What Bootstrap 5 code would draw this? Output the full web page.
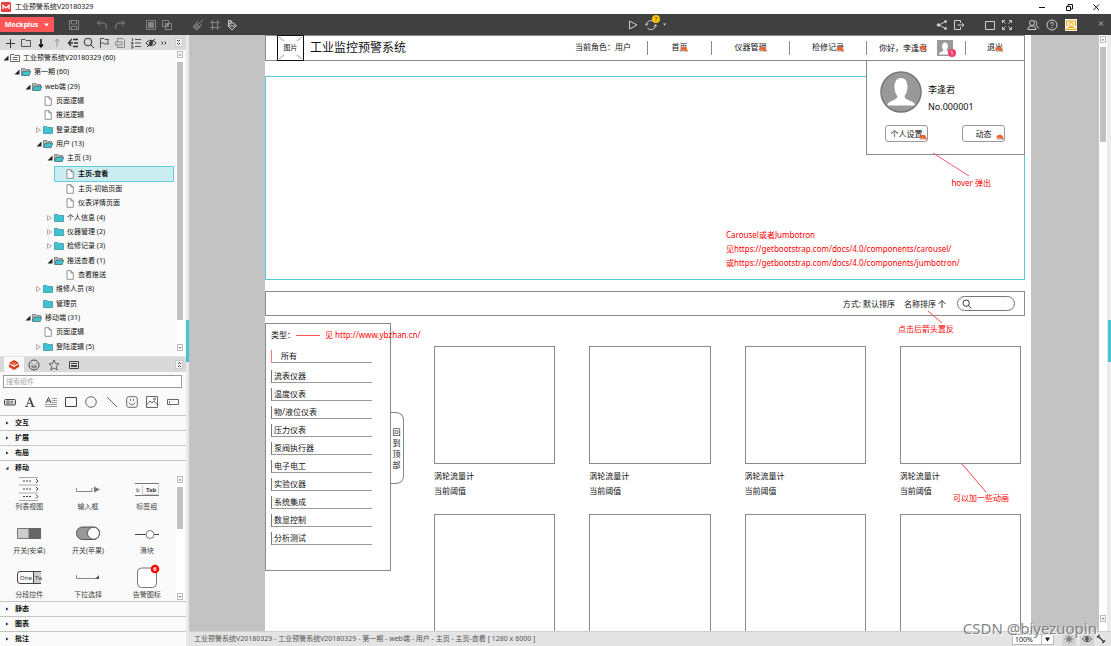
<!DOCTYPE html>
<html lang="zh-CN">
<head>
<meta charset="utf-8">
<meta name="viewport" content="width=device-width, initial-scale=1">
<title>工业预警系统V20180329</title>
<link href="https://cdn.jsdelivr.net/npm/bootstrap@5.3.0/dist/css/bootstrap.min.css" rel="stylesheet">
<style>
:root{--teal:#43c5d3;--bar:#404040;--line:#8a8a8a}
body{font-family:"Noto Sans","Noto Sans CJK SC",sans-serif;font-size:7px;line-height:10px;color:#111;background:#fff}
a{color:inherit;text-decoration:none}
svg{display:block;flex:none;fill:none;stroke:currentColor;stroke-width:1}
button,select{font:inherit;color:inherit;background:none;border:0;padding:0}
button{display:flex;align-items:center;justify-content:center}
.i12{width:12px;height:12px}
.i10{width:10px;height:10px}
.titlebar{height:14px;padding:0 10px 0 1px}
.wctl{gap:17px}
.toolbar{height:21px;background:var(--bar);color:#858585;padding-right:5px}
.toolbar .lit{color:#cfcfcf}
.mock-btn{width:54px;height:15px;background:#ff5757;color:#fff;font-size:7px;font-weight:700;gap:6px}
.left-pane{width:186px;background:#fafafa}
.tree-tools{height:15px;background:#dadada;color:#333;padding:0 3px 0 4px}
.fold-box{width:8px;height:9px;background:#f4f4f4;border:1px solid #ccc}
.tree-list{padding:1px 2px 2px 0}
.tree-list a{padding-left:calc(2px + 11px * var(--lv));white-space:nowrap}
.lv0{--lv:0}.lv1{--lv:1}.lv2{--lv:2}.lv3{--lv:3}.lv4{--lv:4}.lv5{--lv:5}
.tree-list a.chosen{margin-left:54px;padding-left:2px;background:#cbecf1;border:1px solid #5fcfdb;font-weight:700}
.tw{width:8px;height:8px}
.ti{width:10px;height:10px;margin-right:3px}
.vscroll{width:8px;background:#fff;padding:1px 1px}
.vscroll .thumb{background:#c1c1c1}
.left-pane .vscroll{margin-right:2px}
.splitter{width:3px;background:#e9e9e9}
.grip{height:42px;background:var(--teal)}
.pal-tabs{height:15px;background:#d9d9d9;padding:0 3px 0 4px;color:#444}
.pal-tabs .tab-btn{width:20px;height:15px}
.pal-tabs .on{background:#fafafa}
.find-box{height:13px;min-height:13px;margin:3px 4px 0 3px;width:auto;padding:0 2px;border:1px solid #999;border-radius:0;font-size:7px;line-height:11px}
.find-box::placeholder{color:#aaa}
.shape-row{height:27px;padding-right:3px;color:#444}
.acc-head{height:15px;border-top:1px solid #c4c4c4;padding-left:4px;gap:5px;font-weight:700;width:100%;justify-content:flex-start}
.comp-area{height:126px}
.comp-grid{display:grid;grid-template-columns:repeat(3,1fr);grid-auto-rows:44px;padding-top:1px}
.comp-grid button{flex-direction:column;justify-content:flex-start;color:#444}
.comp-grid svg{width:26px;height:26px}
.canvas{background:#c3c3c3;padding:0 68px 0 76px}
.sheet{background:#fff;padding-right:6px;height:100%}
.t8{font-size:8px;line-height:12px}
.t9{font-size:9px;line-height:12px}
.wire{border:1px solid var(--line)}
.site-head{height:26px}
.logo-box{width:27px;height:26px;margin:-1px 6px 0 11px;border:1px solid #111}
.site-title{font-size:12px;line-height:16px}
.site-nav>*{height:14px;border-left:1px solid #888;white-space:nowrap}
.site-nav>.role{border:0;padding-right:16px}
.w-a{width:64px}.w-b{width:78px}.w-c{width:77px}.w-d{width:99px}.w-e{width:59px}
.hot{color:#f2622b;width:8px;height:6px;position:absolute;right:0;bottom:3px}
.ubtn .hot{bottom:1px}
.ava{width:16px;height:16px;background:#999;margin-left:10px}
.pip{left:11px;top:9px;width:8px;height:8px;background:#f23d6c;color:#fff;font-size:6px;line-height:8px;text-align:center}
.user-card{top:24px;right:-1px;width:159px;height:95px;background:#fff;padding:9px 13px;z-index:3}
.user-name{padding:14px 0 0 6px}
.user-name :first-child{margin-bottom:5px}
.user-acts{padding:12px 6px 0 5px}
.ubtn{width:43px;height:17px;border:1px solid #999;border-radius:3px}
.hero{height:204px;margin-top:15px;border:1px solid #59cad7}
.hero-note{width:298px;padding-bottom:9px;color:red;font-size:8px;line-height:14px}
.sortbar{height:25px;margin-top:11px;padding-right:9px;gap:9px}
.pill{width:58px;height:15px;border:1px solid #777;border-radius:8px;padding-left:4px}
.pill input{width:38px;border:0;outline:0;background:none;padding:0;font-size:8px}
.cats{width:126px;height:248px;padding:5px 0 0 5px}
.cats li{width:101px;height:13px;margin-bottom:5px;padding-left:2px;border-left:1px solid #777;border-bottom:1px solid #999}
.cats li:first-child{margin:1px 0 7px;padding-left:9px;border-left-color:#f77}
.dash{width:24px;height:1px;background:#f55;margin:0 5px 0 1px}
.see{color:red}
.totop{width:14px;height:72px;margin:89px 0 0 -1px;border:1px solid #888;border-left:0;border-radius:0 8px 8px 0;font-size:8px;line-height:11px}
.goods{display:grid;grid-template-columns:repeat(4,1fr);column-gap:34px;margin:23px 4px 0 30px;flex:1}
.shot{height:118px;margin-bottom:4px}
.goods .t8{line-height:15px}
.goods>div{height:168px}
.note{position:absolute;color:red;white-space:nowrap;z-index:4}
.n1{right:40px;top:118px}.n2{right:74px;top:276px}.n3{right:20px;top:429px}
.edge{width:4px;background:#ebebeb}
.statusbar{height:15px;background:#e4e4e4;border-top:1px solid #cfcfcf;color:#555;padding:0 3px 0 5px}
.zoom-sel{width:42px;height:11px;background:#fff;border:1px solid #bbb;color:#222}
.zoom-sel select{appearance:none;width:29px;padding-left:2px;border-right:1px solid #bbb;height:9px;line-height:9px}
.sbtn{width:14px;height:13px}
.sbtn.on{background:#d4d4d4}
.wm{right:14px;bottom:8px;font-size:15px;line-height:20px;color:#777;opacity:.9;text-shadow:1px 1px 0 #fff;z-index:9}
</style>
</head>
<body>
<svg width="0" height="0" class="position-absolute" aria-hidden="true">
<symbol id="open" viewBox="0 0 8 8"><path d="M6.500 1.500V6.500H1.500z" fill="#222" stroke="none"/></symbol>
<symbol id="shut" viewBox="0 0 8 8"><path d="M1.500 1.500L5.500 4L1.500 6.500z" stroke="#999" stroke-width=".8"/></symbol>
<symbol id="fold" viewBox="0 0 10 10"><path d="M.5 1.500H4L5 2.500H9.500V8.500H.5z" fill="#3fc3d3" stroke="#2b8f9b" stroke-width=".7"/></symbol>
<symbol id="foldo" viewBox="0 0 10 10"><path d="M.5 8V1.500H4L5 2.500H8.500V4" fill="#bbb" stroke="#666" stroke-width=".7"/><path d="M.6 8.500L2.200 4.200H9.700L8.200 8.500z" fill="#3fc3d3" stroke="#375d62" stroke-width=".7"/></symbol>
<symbol id="doc" viewBox="0 0 10 10"><path d="M2 .7H6L8.300 3V9.300H2z M6 .7V3H8.300" fill="#fff" stroke="#666" stroke-width=".7"/></symbol>
<symbol id="proj" viewBox="0 0 10 10"><path d="M.5 8.500V1.500H4L5 2.500H9.500V8.500z M2.500 4.500H7.500M2.500 6.500H7.500" stroke="#444" stroke-width=".8"/></symbol>
<symbol id="up" viewBox="0 0 6 7"><rect x=".5" y=".5" width="5" height="6" stroke="#bbb"/><path d="M1.500 4.500L3 2.500L4.500 4.500z" fill="#888" stroke="none"/></symbol>
<symbol id="down" viewBox="0 0 6 7"><rect x=".5" y=".5" width="5" height="6" stroke="#bbb"/><path d="M1.500 3L3 5L4.500 3z" fill="#888" stroke="none"/></symbol>
<symbol id="man" viewBox="0 0 16 16"><path d="M2 14.500C2 12 6.500 11.500 6.500 10.300C4.500 8 4.500 2.500 8 2.500S11.500 8 9.500 10.300C9.500 11.500 14 12 14 14.500z" fill="#fff" stroke="none"/></symbol>
<symbol id="hotm" viewBox="0 0 8 6"><path d="M0 5.500L3 3L5 5.500z" fill="#aaa" stroke="none"/><path d="M.5 3C1 .5 5.500 0 6.500 2L8 5.500H5.500L3.500 3.500L1.500 4.500z" fill="currentColor" stroke="none"/></symbol>
<symbol id="glass" viewBox="0 0 12 12"><circle cx="5" cy="5" r="3.800"/><path d="M7.700 7.700L11 11"/></symbol>
<symbol id="tri" viewBox="0 0 6 6"><path d="M2 1.500L4.500 3L2 4.500z" fill="#222" stroke="none"/></symbol>
<symbol id="trio" viewBox="0 0 6 6"><path d="M4.500 1.500V4.500H1.500z" fill="#222" stroke="none"/></symbol>
</svg>

<div class="vh-100 d-flex flex-column overflow-hidden position-relative">
<header class="titlebar d-flex align-items-center flex-shrink-0">
  <svg width="10" height="10" viewBox="0 0 10 10" class="me-1"><rect width="10" height="10" rx="1" fill="#e5423f" stroke="none"/><path d="M2 7V3.500L5 6L8 3.500V7" stroke="#fff" stroke-width="1.300"/></svg>
  <span>工业预警系统V20180329</span>
  <div class="wctl d-flex ms-auto">
    <button aria-label="最小化"><svg class="i10" viewBox="0 0 10 10"><path d="M2 5.500H8"/></svg></button>
    <button aria-label="还原"><svg class="i10" viewBox="0 0 10 10"><path d="M2.500 4.500H6.500V8.500H2.500zM4 4V2.500H8.500V7H7"/></svg></button>
    <button aria-label="关闭"><svg class="i10" viewBox="0 0 10 10"><path d="M2.500 2.500L8 8M8 2.500L2.500 8"/></svg></button>
  </div>
</header>

<nav class="toolbar d-flex align-items-center flex-shrink-0" aria-label="工具栏">
  <button class="mock-btn">Mockplus<svg width="5" height="4" viewBox="0 0 5 4"><path d="M0 .5H5L2.500 3.500z" fill="#fff" stroke="none"/></svg></button>
  <button style="margin-left:14px" aria-label="保存"><svg class="i12" viewBox="0 0 12 12"><path d="M1.500 1.500H10.500V10.500H1.500zM3.500 1.500V5H8.500V1.500M3.500 10.500V7.500H8.500V10.500"/></svg></button>
  <div class="d-flex ms-3" style="gap:6px">
    <button aria-label="撤销"><svg class="i12" viewBox="0 0 12 12"><path d="M4 1.500L1.500 4L4 6.500M1.500 4H7.500C10 4.500 11 7 10 10"/></svg></button>
    <button aria-label="重做"><svg class="i12" viewBox="0 0 12 12"><path d="M8 1.500L10.500 4L8 6.500M10.500 4H4.500C2 4.500 1 7 2 10"/></svg></button>
  </div>
  <div class="d-flex gap-1" style="margin-left:19px">
    <button aria-label="组合"><svg class="i12" viewBox="0 0 12 12"><path d="M1.500 1.500H10.500V10.500H1.500z"/><path d="M3.500 3.500H8.500V8.500H3.500z" fill="currentColor"/></svg></button>
    <button aria-label="取消组合"><svg class="i12" viewBox="0 0 12 12"><path d="M1.500 1.500H7.500V7.500H1.500z"/><path d="M4.500 4.500H7.500V7.500H4.500z" fill="currentColor"/><path d="M4.500 4.500H10.500V10.500H4.500z"/></svg></button>
  </div>
  <div class="d-flex" style="margin-left:19px;gap:5px">
    <button aria-label="格式刷"><svg class="i12" viewBox="0 0 12 12"><path d="M11 .8L8 4.200M5.500 2.500L9.500 6.500L8 8L4 4z"/><path d="M4 4.500L1 7.500L5 11L7.800 8z" fill="currentColor" fill-opacity=".6"/></svg></button>
    <button aria-label="网格"><svg class="i12" viewBox="0 0 12 12"><path d="M3.500 1V11M8.500 1V11M1 3.500H11M1 8.500H11"/></svg></button>
    <button class="lit" aria-label="填充"><svg class="i12" viewBox="0 0 12 12"><path d="M5 2.500L10.500 6.500L6 11L2 7zM2.500 6V1.500H5V5.500M2 7H9"/></svg></button>
  </div>
  <div class="lit d-flex align-items-center ms-auto" style="gap:6px;margin-right:270px">
    <button aria-label="演示"><svg class="i12" viewBox="0 0 12 12"><path d="M2.500 2L10 6L2.500 10z"/></svg></button>
    <button class="position-relative" aria-label="同步"><svg class="i12" viewBox="0 0 12 12"><path d="M1.500 5.500A4.500 4.500 0 0 1 8 2M10.500 6.500A4.500 4.500 0 0 1 2.500 9M0 4.500L1.500 6.500L3 4.500M9 7.500L10.500 5.500L12 7.500"/></svg>
      <span class="position-absolute rounded-circle text-center" style="width:8px;height:8px;left:7px;top:-4px;background:#f7c600;color:#222;font-size:6px;line-height:8px">?</span></button>
    <svg width="3" height="3" viewBox="0 0 3 3"><path d="M0 .5H3L1.500 2.500z" fill="#ddd" stroke="none"/></svg>
  </div>
  <div class="lit d-flex" style="gap:5px">
    <button aria-label="分享"><svg class="i12" viewBox="0 0 12 12"><path d="M9.500 2.500L3 6L9.500 9.500"/><g fill="currentColor"><circle cx="9.500" cy="2.500" r="1"/><circle cx="2.500" cy="6" r="1.300"/><circle cx="9.500" cy="9.500" r="1"/></g></svg></button>
    <button aria-label="导出"><svg class="i12" viewBox="0 0 12 12"><path d="M7.500 4V1.500H1.500V10.500H7.500V8M4.500 6H11M9 4L11 6L9 8"/></svg></button>
  </div>
  <div class="lit d-flex" style="gap:5px;margin-left:19px">
    <button aria-label="窗口"><svg class="i12" viewBox="0 0 12 12"><path d="M1.500 2.500H10.500V10.500H1.500z"/></svg></button>
    <button aria-label="全屏"><svg class="i12" viewBox="0 0 12 12"><path d="M1.500 4V1.500H4M8 1.500H10.500V4M10.500 8V10.500H8M4 10.500H1.500V8M2 2L4.500 4.500M10 2L7.500 4.500M10 10L7.500 7.500M2 10L4.500 7.500"/></svg></button>
  </div>
  <div class="lit d-flex" style="gap:7px;margin-left:14px">
    <button aria-label="团队"><svg class="i12" viewBox="0 0 12 12"><circle cx="5" cy="4" r="2.500"/><path d="M.8 10.500C1 8 2.500 7 5 7S8.500 8 9 10.500zM7.500 1.800C10 1.500 10.500 5 8.800 6.300C10.500 7 11.200 8 11.300 9.500"/></svg></button>
    <button aria-label="帮助"><svg class="i12" viewBox="0 0 12 12"><circle cx="6" cy="6" r="5"/><path d="M4.500 4.800C4.500 3 7.500 3 7.500 4.800C7.500 6 6 5.800 6 7.300M6 8.200V9.200"/></svg></button>
    <button aria-label="账户"><svg class="i12" viewBox="0 0 12 12"><path d="M0 0H12V12H0z" fill="#fff6df" stroke="none"/><path d="M1.500 7V2H10.500V7M1 10.500L3 8.500H9L11 10.500z" stroke="#f2a51d"/><circle cx="6" cy="5.500" r="2" stroke="#f2a51d"/></svg></button>
  </div>
  <button style="margin-left:19px" aria-label="关闭"><svg class="i10" viewBox="0 0 10 10"><path d="M3 1.500L7 5.500M7 1.500L3 5.500" stroke="#bbb"/></svg></button>
</nav>

<div class="d-flex flex-fill" style="min-height:0">
<aside class="left-pane d-flex flex-column flex-shrink-0">
  <div class="tree-tools d-flex align-items-center justify-content-between flex-shrink-0">
    <button aria-label="新建"><svg class="i12" viewBox="0 0 12 12"><path d="M6.500 2V11M2 6.500H11"/></svg></button>
    <button aria-label="文件夹"><svg class="i12" viewBox="0 0 12 12"><path d="M1.500 9.500V2.500H5L6 3.500H10.500V9.500z" stroke-width=".8"/></svg></button>
    <button aria-label="下移"><svg class="i12" viewBox="0 0 12 12"><path d="M6 2V10M4 7.500L6 10L8 7.500" stroke="#000" stroke-width="1.400"/></svg></button>
    <button aria-label="上移"><svg class="i12" viewBox="0 0 12 12"><path d="M6 10V2M4 4.500L6 2L8 4.500" stroke="#999"/></svg></button>
    <button aria-label="层级"><svg class="i12" viewBox="0 0 12 12"><path d="M6 2.500H11M7 6H11M6 9.500H11M4 3L1.500 6L4 9M1.500 6H6M4 2.500H5" stroke-width="1.400"/></svg></button>
    <button aria-label="搜索"><svg class="i12"><use href="#glass"/></svg></button>
    <button aria-label="标记"><svg class="i12" viewBox="0 0 12 12"><path d="M2.500 11V1.500H6L7 2.500H10.500L9.500 4.800L10.500 7H6.500L5.500 6H2.500" stroke-width=".8"/></svg></button>
    <button aria-label="模板"><svg class="i12" viewBox="0 0 12 12"><path d="M3.500 5V1.500H8.500L10.500 3.500V10.500H3.500V8M1.500 5H8V8H1.500z" stroke="#888"/></svg></button>
    <button aria-label="编号"><svg class="i12" viewBox="0 0 12 12"><path d="M5 2.500H11M5 6H11M5 9.500H11M2.500 1V4M1 5.500H3V7H1M1 9H3V11H1" stroke-width=".8"/></svg></button>
    <button aria-label="隐藏"><svg class="i12" viewBox="0 0 12 12"><path d="M1 6C3.500 2.500 8.500 2.500 11 6C8.500 9.500 3.500 9.500 1 6zM2 10L10 2"/><circle cx="6" cy="6" r="1.500" fill="currentColor"/></svg></button>
    <button aria-label="更多"><svg width="6" height="8" viewBox="0 0 6 8"><path d="M.5 2.500L2 4L.5 5.500M3.500 2.500L5 4L3.500 5.500"/></svg></button>
    <button class="fold-box ms-1" aria-label="收起"><svg width="5" height="7" viewBox="0 0 5 7"><path d="M1 1L2.500 2.500L4 1M1 4L2.500 5.500L4 4"/></svg></button>
  </div>
  <div class="d-flex flex-fill" style="min-height:0">
    <nav class="tree-list d-flex flex-column flex-fill" aria-label="页面树">
      <a href="#" class="lv0 flex-fill d-flex align-items-center"><svg class="tw"><use href="#open"/></svg><svg class="ti"><use href="#proj"/></svg>工业预警系统V20180329 (60)</a>
      <a href="#" class="lv1 flex-fill d-flex align-items-center"><svg class="tw"><use href="#open"/></svg><svg class="ti"><use href="#foldo"/></svg>第一期 (60)</a>
      <a href="#" class="lv2 flex-fill d-flex align-items-center"><svg class="tw"><use href="#open"/></svg><svg class="ti"><use href="#foldo"/></svg>web端 (29)</a>
      <a href="#" class="lv3 flex-fill d-flex align-items-center"><svg class="tw"></svg><svg class="ti"><use href="#doc"/></svg>页面逻辑</a>
      <a href="#" class="lv3 flex-fill d-flex align-items-center"><svg class="tw"></svg><svg class="ti"><use href="#doc"/></svg>推送逻辑</a>
      <a href="#" class="lv3 flex-fill d-flex align-items-center"><svg class="tw"><use href="#shut"/></svg><svg class="ti"><use href="#fold"/></svg>登录逻辑 (6)</a>
      <a href="#" class="lv3 flex-fill d-flex align-items-center"><svg class="tw"><use href="#open"/></svg><svg class="ti"><use href="#foldo"/></svg>用户 (13)</a>
      <a href="#" class="lv4 flex-fill d-flex align-items-center"><svg class="tw"><use href="#open"/></svg><svg class="ti"><use href="#foldo"/></svg>主页 (3)</a>
      <a href="#" class="lv5 chosen flex-fill d-flex align-items-center"><svg class="tw"></svg><svg class="ti"><use href="#doc"/></svg>主页-查看</a>
      <a href="#" class="lv5 flex-fill d-flex align-items-center"><svg class="tw"></svg><svg class="ti"><use href="#doc"/></svg>主页-初始页面</a>
      <a href="#" class="lv5 flex-fill d-flex align-items-center"><svg class="tw"></svg><svg class="ti"><use href="#doc"/></svg>仪表详情页面</a>
      <a href="#" class="lv4 flex-fill d-flex align-items-center"><svg class="tw"><use href="#shut"/></svg><svg class="ti"><use href="#fold"/></svg>个人信息 (4)</a>
      <a href="#" class="lv4 flex-fill d-flex align-items-center"><svg class="tw"><use href="#shut"/></svg><svg class="ti"><use href="#fold"/></svg>仪器管理 (2)</a>
      <a href="#" class="lv4 flex-fill d-flex align-items-center"><svg class="tw"><use href="#shut"/></svg><svg class="ti"><use href="#fold"/></svg>检修记录 (3)</a>
      <a href="#" class="lv4 flex-fill d-flex align-items-center"><svg class="tw"><use href="#open"/></svg><svg class="ti"><use href="#foldo"/></svg>推送查看 (1)</a>
      <a href="#" class="lv5 flex-fill d-flex align-items-center"><svg class="tw"></svg><svg class="ti"><use href="#doc"/></svg>查看推送</a>
      <a href="#" class="lv3 flex-fill d-flex align-items-center"><svg class="tw"><use href="#shut"/></svg><svg class="ti"><use href="#fold"/></svg>维修人员 (8)</a>
      <a href="#" class="lv3 flex-fill d-flex align-items-center"><svg class="tw"></svg><svg class="ti"><use href="#fold"/></svg>管理员</a>
      <a href="#" class="lv2 flex-fill d-flex align-items-center"><svg class="tw"><use href="#open"/></svg><svg class="ti"><use href="#foldo"/></svg>移动端 (31)</a>
      <a href="#" class="lv3 flex-fill d-flex align-items-center"><svg class="tw"></svg><svg class="ti"><use href="#doc"/></svg>页面逻辑</a>
      <a href="#" class="lv3 flex-fill d-flex align-items-center"><svg class="tw"><use href="#shut"/></svg><svg class="ti"><use href="#fold"/></svg>登陆逻辑 (5)</a>
    </nav>
    <div class="vscroll d-flex flex-column"><svg width="6" height="7"><use href="#up"/></svg><div class="thumb mt-1" style="height:85%"></div><svg class="mt-auto mb-1" width="6" height="7"><use href="#down"/></svg></div>
  </div>

  <section class="flex-shrink-0 border-top">
    <div class="pal-tabs d-flex align-items-center">
      <button class="tab-btn on" aria-label="组件"><svg class="i12" viewBox="0 0 12 12"><path d="M1 4L6 1L11 4L6 6.500z M1 5L6 8L11 5V8L6 11L1 8z" fill="#dc3d1c" stroke="none"/><path d="M4.500 4L6 5L7.500 4" stroke="#fff" stroke-width=".7"/></svg></button>
      <button class="tab-btn" aria-label="图标"><svg class="i12" viewBox="0 0 12 12"><circle cx="6" cy="6" r="5"/><path d="M3.500 7H8.500C8 9.500 4 9.500 3.500 7zM4 4V5M8 4V5" stroke-width=".8"/></svg></button>
      <button class="tab-btn" aria-label="收藏"><svg class="i12" viewBox="0 0 12 12"><path d="M6 1L7.500 4.500L11 4.800L8.300 7.200L9.200 11L6 9L2.800 11L3.700 7.200L1 4.800L4.500 4.500z" stroke-width=".8"/></svg></button>
      <button class="tab-btn" aria-label="母版"><svg class="i12" viewBox="0 0 12 12"><path d="M1.500 2.500H10.500V9.500H1.500zM3 4.500H9M3 6.500H9M3 7.500H9"/></svg></button>
      <button class="fold-box ms-auto" aria-label="展开"><svg width="5" height="7" viewBox="0 0 5 7"><path d="M1 3L2.500 1.500L4 3M1 6L2.500 4.500L4 6"/></svg></button>
    </div>
    <div class="d-grid"><input class="form-control find-box" type="search" placeholder="搜索组件" aria-label="搜索组件"></div>
    <div class="shape-row d-flex align-items-center">
      <button class="flex-fill" aria-label="按钮"><svg width="12" height="12" viewBox="0 0 12 12"><rect x=".5" y="3.500" width="11" height="5.500" rx="1" fill="#ddd"/><path d="M3 5H5V7.500H3zM7 5V7.500M9 5L7.500 6.200L9 7.500" stroke-width=".7"/></svg></button>
      <button class="flex-fill" aria-label="文本"><svg class="i12" viewBox="0 0 12 12"><path d="M2.500 10.500L5.500 2M4 7.500H8M1 10.500H4M7 10.500H11" stroke-width=".8"/><path d="M5.500 1.500L9 10.500" stroke-width="1.800"/></svg></button>
      <button class="flex-fill" aria-label="段落"><svg class="i12" viewBox="0 0 12 12"><path d="M1 7L3.500 1.500L6 7M2 5H5" /><path d="M7 2.500H12M7 4.500H12M7 6.500H12M0 8.500H12M0 10.500H12" stroke="#888" stroke-width=".8"/></svg></button>
      <button class="flex-fill" aria-label="矩形"><svg class="i12" viewBox="0 0 12 12"><path d="M.5 1.500H11.500V10.500H.5z"/></svg></button>
      <button class="flex-fill" aria-label="圆形"><svg class="i12" viewBox="0 0 12 12"><circle cx="6" cy="6" r="5.300" stroke-width=".8"/></svg></button>
      <button class="flex-fill" aria-label="直线"><svg class="i12" viewBox="0 0 12 12"><path d="M1 1L11 11" stroke-width=".8"/></svg></button>
      <button class="flex-fill" aria-label="表情"><svg class="i12" viewBox="0 0 12 12"><rect x=".7" y=".7" width="10.600" height="10.600" rx="2" stroke-width=".8"/><path d="M3 6.500C4 9.500 8 9.500 9 6.500M4.500 3V5M7.500 3V5" stroke-width=".8"/></svg></button>
      <button class="flex-fill" aria-label="图片"><svg class="i12" viewBox="0 0 12 12"><path d="M.5 .5H11.500V11.500H.5zM.5 9L4 5L6 7L8 5L11.500 9" stroke-width=".8"/><circle cx="8.500" cy="3" r="1" stroke-width=".8"/></svg></button>
      <button class="flex-fill" aria-label="输入"><svg class="i12" viewBox="0 0 12 12"><path d="M.5 3.500H11.500V8.500H.5zM2.500 5V7.500" stroke-width=".8"/></svg></button>
    </div>
    <button class="acc-head"><svg width="6" height="6"><use href="#tri"/></svg>交互</button>
    <button class="acc-head"><svg width="6" height="6"><use href="#tri"/></svg>扩展</button>
    <button class="acc-head"><svg width="6" height="6"><use href="#tri"/></svg>布局</button>
    <button class="acc-head"><svg width="6" height="6"><use href="#trio"/></svg>移动</button>
    <div class="comp-area d-flex overflow-hidden">
      <div class="comp-grid flex-fill">
        <button><svg viewBox="0 0 26 26"><path d="M3 1.500H22M3 9H22M3 17H22M3 24.500H22" stroke="#aaa"/><path d="M7 5H16M7 13H16M7 20.500H16" stroke-dasharray="2 1"/><path d="M20 3L22 5L20 7M20 11L22 13L20 15M20 18.500L22 20.500L20 22.500"/></svg>列表视图</button>
        <button><svg viewBox="0 0 26 26"><path d="M1.500 12V15.500H17V12" stroke="#888"/><path d="M19 10.500L25 13.500L19 16.500z" fill="#777" stroke="none"/></svg>输入框</button>
        <button><svg viewBox="0 0 26 26"><path d="M1 7.500H25M1 19.500H25" stroke="#777"/><path d="M8.500 9V18M24.500 9V18M9 18.500H24" stroke="#ccc"/><text x="2" y="15.500" font-size="6" fill="#444" stroke="none">b</text><text x="12" y="15.500" font-size="6" font-weight="700" fill="#444" stroke="none">Tab</text></svg>标签组</button>
        <button><svg viewBox="0 0 26 26"><path d="M1.500 8.500H13V18.500H1.500z" fill="#ccc" stroke="#777"/><path d="M13 8H25V19H13z" fill="#666" stroke="none"/></svg>开关(安卓)</button>
        <button><svg viewBox="0 0 26 26"><rect x="1.500" y="7" width="23" height="12.500" rx="6" fill="#999" stroke="#555"/><circle cx="18.500" cy="13.200" r="6" fill="#fff" stroke="#555"/></svg>开关(苹果)</button>
        <button><svg viewBox="0 0 26 26"><path d="M1 14.500H25"/><circle cx="16" cy="14.500" r="4" fill="#fff" stroke="#777"/></svg>滑块</button>
        <button><svg viewBox="0 0 26 26"><path d="M17 7.500H25V19.500H17z" fill="#ccc" stroke="none"/><path d="M25 7.500H4Q1.500 7.500 1.500 10V17Q1.500 19.500 4 19.500H25M17.500 7.500V19.500"/><text x="4" y="16" font-size="6" fill="#333" stroke="none">One</text><text x="19" y="16" font-size="6" fill="#333" stroke="none">Tw</text></svg>分段控件</button>
        <button><svg viewBox="0 0 26 26"><path d="M1.500 11V14.500H23" stroke="#888"/><path d="M24 11V15H20z" fill="#555" stroke="none"/></svg>下拉选择</button>
        <button><svg viewBox="0 0 26 26"><rect x="3.500" y="4" width="19" height="19.500" rx="4" fill="#fff" stroke="#777"/><circle cx="21" cy="5" r="4.300" fill="red" stroke="none"/><text x="21" y="7.200" text-anchor="middle" font-size="6" font-weight="700" fill="#fff" stroke="none">6</text></svg>告警图标</button>
      </div>
      <div class="vscroll d-flex flex-column"><svg width="6" height="7"><use href="#up"/></svg><div class="thumb mt-1" style="height:34%"></div><svg class="mt-auto" width="6" height="7"><use href="#down"/></svg></div>
    </div>
    <button class="acc-head"><svg width="6" height="6"><use href="#tri"/></svg>静态</button>
    <button class="acc-head"><svg width="6" height="6"><use href="#tri"/></svg>图表</button>
    <button class="acc-head"><svg width="6" height="6"><use href="#tri"/></svg>批注</button>
  </section>
</aside>
<div class="splitter d-flex flex-column justify-content-center flex-shrink-0"><div class="grip"></div></div>

<div class="d-flex flex-column flex-fill" style="min-width:0">
  <div class="d-flex flex-fill" style="min-height:0">
    <main class="canvas flex-fill overflow-hidden">
      <div class="sheet position-relative">
        <header class="site-head wire d-flex align-items-center position-relative">
          <div class="logo-box position-relative d-flex align-items-center justify-content-center"><svg class="position-absolute" width="25" height="24" viewBox="0 0 25 24"><path d="M1 1L6 5M24 1L19 5M1 23L6 19M24 23L19 19" stroke="#999"/></svg>图片</div>
          <div class="site-title text-nowrap">工业监控预警系统</div>
          <nav class="site-nav t8 d-flex align-items-center ms-auto">
            <span class="role">当前角色：用户</span>
            <a href="#" class="w-a d-flex justify-content-center"><span class="position-relative">首页<svg class="hot"><use href="#hotm"/></svg></span></a>
            <a href="#" class="w-b d-flex justify-content-center"><span class="position-relative">仪器管理<svg class="hot"><use href="#hotm"/></svg></span></a>
            <a href="#" class="w-c d-flex justify-content-center"><span class="position-relative">检修记录<svg class="hot"><use href="#hotm"/></svg></span></a>
            <a href="#" class="w-d d-flex justify-content-center align-items-center"><span class="position-relative">你好，李逢君<svg class="hot"><use href="#hotm"/></svg></span><span class="ava position-relative"><svg width="16" height="16"><use href="#man"/></svg><span class="pip position-absolute rounded-circle">1</span></span></a>
            <a href="#" class="w-e d-flex justify-content-center"><span class="position-relative">退出<svg class="hot"><use href="#hotm"/></svg></span></a>
          </nav>
          <div class="user-card wire position-absolute">
            <div class="d-flex align-items-center">
              <svg width="42" height="42" viewBox="0 0 42 42"><circle cx="21" cy="21" r="20" fill="#999" stroke="#777" stroke-width="1.500"/><path d="M7.500 34.500C7.500 29 18 30 17.500 25C13 20 13 7 21 7S29 20 24.500 25C24 30 35 29 35 34.500z" fill="#fff" stroke="none"/></svg>
              <div class="user-name t9"><div>李逢君</div><div>No.000001</div></div>
            </div>
            <div class="user-acts t8 d-flex justify-content-between">
              <button class="ubtn position-relative">个人设置<svg class="hot"><use href="#hotm"/></svg></button>
              <button class="ubtn position-relative">动态<svg class="hot"><use href="#hotm"/></svg></button>
            </div>
          </div>
        </header>

        <section class="hero d-flex justify-content-end align-items-end">
          <div class="hero-note">Carousel或者Jumbotron<br>见<a href="https://getbootstrap.com/docs/4.0/components/carousel/">https://getbootstrap.com/docs/4.0/components/carousel/</a><br>或<a href="https://getbootstrap.com/docs/4.0/components/jumbotron/">https://getbootstrap.com/docs/4.0/components/jumbotron/</a></div>
        </section>

        <div class="sortbar wire t8 d-flex align-items-center justify-content-end">
          <span>方式: 默认排序</span>
          <button>名称排序<svg class="i12" viewBox="0 0 12 12"><path d="M6 10V2.500M2.500 6L6 2.500L9.500 6" stroke-width=".8"/></svg></button>
          <label class="pill d-flex align-items-center"><svg class="i10" viewBox="0 0 12 12"><use href="#glass"/></svg><input type="text" aria-label="搜索"></label>
        </div>

        <div class="d-flex align-items-start" style="margin-top:7px">
          <aside class="cats wire t8 flex-shrink-0">
            <div class="d-flex align-items-center text-nowrap">类型：<span class="dash flex-shrink-0"></span><a class="see" href="http://www.ybzhan.cn/">见 http://www.ybzhan.cn/</a></div>
            <ul class="list-unstyled mb-0 pt-2">
              <li>所有</li><li>流表仪器</li><li>温度仪表</li><li>物/液位仪表</li><li>压力仪表</li><li>泵阀执行器</li><li>电子电工</li><li>实验仪器</li><li>系统集成</li><li>数显控制</li><li>分析测试</li>
            </ul>
          </aside>
          <button class="totop flex-column flex-shrink-0"><span>回</span><span>到</span><span>顶</span><span>部</span></button>
          <div class="goods">
            <div><div class="shot wire"></div><div class="t8">涡轮流量计<br>当前阈值</div></div>
            <div><div class="shot wire"></div><div class="t8">涡轮流量计<br>当前阈值</div></div>
            <div><div class="shot wire"></div><div class="t8">涡轮流量计<br>当前阈值</div></div>
            <div><div class="shot wire"></div><div class="t8">涡轮流量计<br>当前阈值</div></div>
            <div><div class="shot wire"></div></div><div><div class="shot wire"></div></div><div><div class="shot wire"></div></div><div><div class="shot wire"></div></div>
          </div>
        </div>

        <div class="note n1 t8"><svg width="58" height="24" viewBox="0 0 58 24"><path d="M0 0L36 23" stroke="#f2557f"/></svg><div class="text-end">hover 弹出</div></div>
        <div class="note n2 t8"><svg width="59" height="12" viewBox="0 0 59 12"><path d="M30 0L44 12" stroke="#f44"/></svg>点击后箭头置反</div>
        <div class="note n3 t8"><svg width="58" height="28" viewBox="0 0 58 28"><path d="M9 0L33 28" stroke="#f44"/></svg>可以加一些动画</div>
      </div>
    </main>
    <div class="vscroll d-flex flex-column flex-shrink-0"><svg width="6" height="7"><use href="#up"/></svg><div class="thumb mt-1" style="height:16%"></div><svg class="mt-auto mb-2" width="6" height="7"><use href="#down"/></svg></div>
    <div class="edge d-flex flex-column justify-content-center flex-shrink-0"><div class="grip ms-auto mt-3" style="width:3px"></div></div>
  </div>
  <footer class="statusbar d-flex align-items-center flex-shrink-0">
    <span class="text-nowrap">工业预警系统V20180329 - 工业预警系统V20180329 - 第一期 - web端 - 用户 - 主页 - 主页-查看 [ 1280 x 6000 ]</span>
    <label class="zoom-sel d-flex align-items-center ms-auto me-2"><select aria-label="缩放"><option>100%</option><option>50%</option></select><svg class="mx-auto" width="5" height="5" viewBox="0 0 5 5"><path d="M0 .5H5L2.500 4.500z" fill="#111" stroke="none"/></svg></label>
    <button class="sbtn on me-1" aria-label="亮度"><svg class="i10" viewBox="0 0 10 10"><circle cx="5" cy="5" r="2.500" fill="#777" stroke="none"/><path d="M5 0V10M0 5H10M1.500 1.500L8.500 8.500M8.500 1.500L1.500 8.500" stroke="#888" stroke-width=".8"/></svg></button>
    <button class="sbtn on" aria-label="预览"><svg class="i10" viewBox="0 0 10 10"><path d="M.5 5C3 1.500 7 1.500 9.500 5C7 8.500 3 8.500 .5 5z"/><circle cx="5" cy="5" r="1.500" fill="currentColor"/></svg></button>
    <button class="sbtn" aria-label="设置"><svg class="i10" viewBox="0 0 10 10"><path d="M1 3.500L3.500 1M2.500 2.500L7.500 7.500M6.500 9L9 6.500" stroke="#333" stroke-width="1.300"/></svg></button>
  </footer>
</div>
</div>
<div class="wm position-absolute">CSDN @biyezuopin</div>
</div>
<script src="https://cdn.jsdelivr.net/npm/bootstrap@5.3.0/dist/js/bootstrap.bundle.min.js"></script>
</body>
</html>
